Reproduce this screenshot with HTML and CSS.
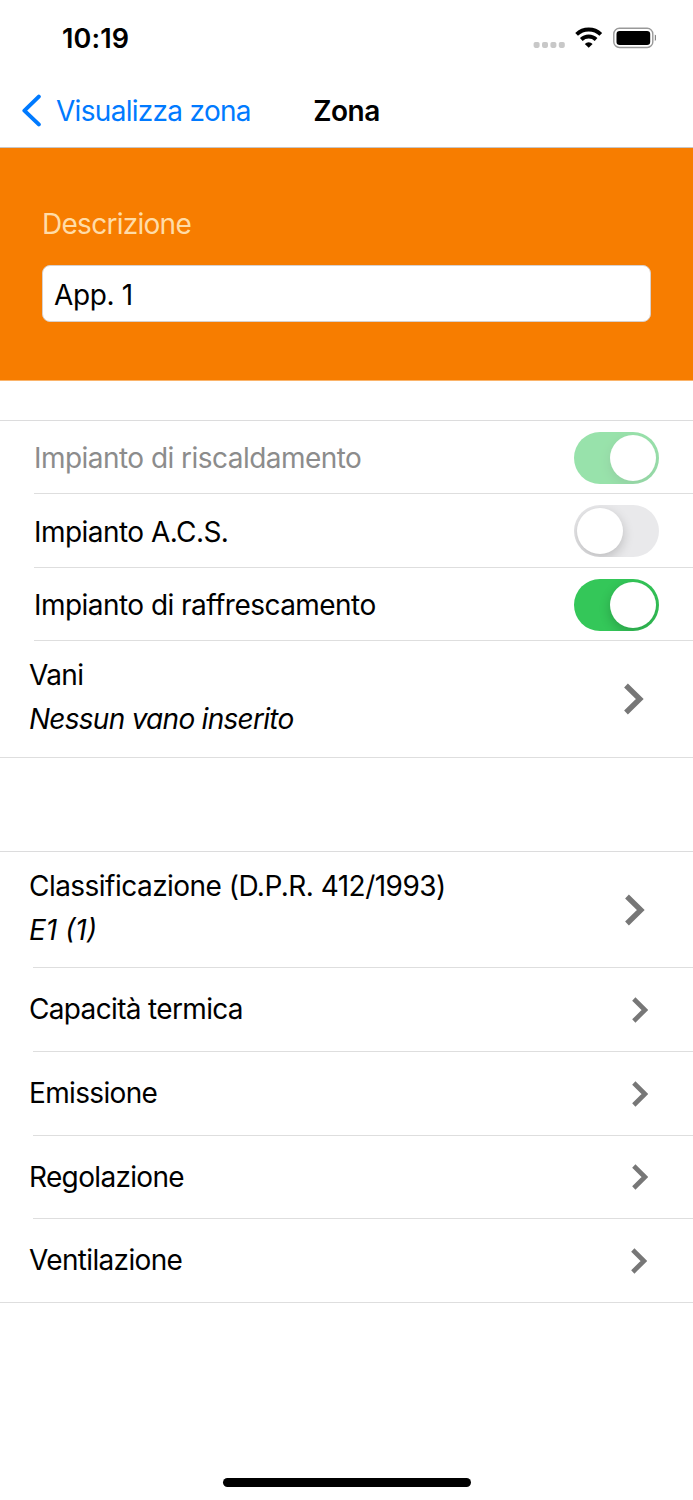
FILE: index.html
```html
<!DOCTYPE html>
<html lang="it">
<head>
    <meta charset="UTF-8">
    <meta name="viewport" content="width=device-width, initial-scale=1.0">
    <title>Zona</title>
    <link rel="stylesheet" href="styles.css">
</head>
<body>
    <!-- Barra di stato -->
    <div class="status-bar">
        <span class="time">10:19</span>
        <svg class="status-icons" width="126" height="24" viewBox="0 0 126 24">
            <g fill="#c8c8c8">
                <rect x="3.6" y="15.9" width="6" height="6" rx="1.8"/>
                <rect x="12" y="15.9" width="6" height="6" rx="1.8"/>
                <rect x="20.4" y="15.9" width="6" height="6" rx="1.8"/>
                <rect x="28.8" y="15.9" width="6" height="6" rx="1.8"/>
            </g>
            <g fill="none" stroke="#000" stroke-width="3.9">
                <path d="M46.6 8.4a17.4 17.4 0 0 1 24.2 0"/>
                <path d="M51.3 13.5a10.7 10.7 0 0 1 14.8 0"/>
            </g>
            <path d="M58.7 21.8l-3.9-3.9a5.6 5.6 0 0 1 7.8 0z"/>
            <rect x="83.8" y="2.3" width="39" height="19.2" rx="5.6" fill="none" stroke="#999" stroke-width="1.4"/>
            <rect x="86.5" y="4.9" width="33.7" height="14" rx="3.2"/>
            <path d="M124.8 8.4c2.7 1.4 2.7 5.2 0 6.6z" fill="#888"/>
        </svg>
    </div>

    <!-- Navigazione -->
    <div class="nav-bar">
        <a class="back" href="#">
            <svg width="22" height="34" viewBox="0 0 22 34"><path d="M18.8 2.6L4.4 16.6l14.4 13.8" fill="none" stroke="#007aff" stroke-width="4" stroke-linecap="round" stroke-linejoin="round"/></svg>
            <span>Visualizza zona</span>
        </a>
        <h1>Zona</h1>
    </div>

    <form class="header">
        <label for="description">Descrizione</label>
        <input type="text" id="description" value="App. 1">
    </form>

    <!-- Impianti -->
    <div class="list">
        <div class="row r73 disabled">
            <span>Impianto di riscaldamento</span>
            <div class="switch on"></div>
        </div>
        <div class="row r74">
            <span>Impianto A.C.S.</span>
            <div class="switch"></div>
        </div>
        <div class="row r73">
            <span>Impianto di raffrescamento</span>
            <div class="switch on"></div>
        </div>
        <div class="row link tall last">
            <div class="text"><span>Vani</span><em>Nessun vano inserito</em></div>
            <svg class="arrow big" viewBox="0 0 20 32"><path d="M2 2.5L15.8 16 2 29.5" /></svg>
        </div>
    </div>

    <!-- Caratteristiche della zona -->
    <div class="list second">
        <div class="row link tall">
            <div class="text"><span class="wide">Classificazione (D.P.R. 412/1993)</span><em class="class-code">E1 (1)</em></div>
            <svg class="arrow big" viewBox="0 0 20 32"><path d="M2 2.5L15.8 16 2 29.5" /></svg>
        </div>
        <div class="row link">
            <span>Capacità termica</span>
            <svg class="arrow" viewBox="0 0 16 26"><path d="M1.8 2L12.9 13 1.8 24" /></svg>
        </div>
        <div class="row link">
            <span>Emissione</span>
            <svg class="arrow" viewBox="0 0 16 26"><path d="M1.8 2L12.9 13 1.8 24" /></svg>
        </div>
        <div class="row link short">
            <span>Regolazione</span>
            <svg class="arrow" viewBox="0 0 16 26"><path d="M1.8 2L12.9 13 1.8 24" /></svg>
        </div>
        <div class="row link last">
            <span>Ventilazione</span>
            <svg class="arrow" viewBox="0 0 16 26"><path d="M1.8 2L12.9 13 1.8 24" /></svg>
        </div>
    </div>

    <div class="home-indicator"></div>
</body>
</html>
```
FILE: styles.css
```css
* {
    box-sizing: border-box;
}

body {
    font-family: Inter, "Liberation Sans", sans-serif;
    font-size: 28px;
    line-height: 34px;
    letter-spacing: -0.54px;
    background-color: #fff;
    margin: 0;
    color: #000;
    height: 1500px;
    display: flex;
    flex-direction: column;
}

.status-bar {
    display: flex;
    justify-content: space-between;
    height: 74px;
    padding: 22px 37px 0 62px;
}

.time {
    font-size: 27px;
    font-weight: 600;
    letter-spacing: 0.1px;
}

.status-icons {
    margin-top: 4px;
}

.nav-bar {
    display: grid;
    grid-template-columns: 1fr auto 1fr;
    align-items: center;
    height: 74px;
    border-bottom: 1px solid #c6c6c8;
}

.back {
    display: flex;
    align-items: center;
    padding-left: 20px;
    color: #007aff;
    text-decoration: none;
    white-space: nowrap;
    letter-spacing: -0.7px;
}

.back span {
    margin-left: 14px;
}

h1 {
    margin: 0;
    font-size: 28px;
    font-weight: 600;
    letter-spacing: -0.45px;
}

.header {
    display: flex;
    flex-direction: column;
    height: 233px;
    padding: 59px 42px 0;
    border-bottom: 1px solid #fbb46a;
    background-color: #f77d00;
}

.header label {
    color: #ffdca8;
    letter-spacing: -0.72px;
}

.header input {
    width: 100%;
    height: 57px;
    margin-top: 24px;
    padding: 2px 11px 0;
    border: 1px solid #d8d0cc;
    border-radius: 8px;
    background-color: #fff;
    color: #000;
    font: inherit;
    letter-spacing: -0.35px;
}

.list {
    margin-top: 39px;
    border-top: 1px solid #dcdcdd;
}

.list.second {
    margin-top: 93px;
}

.row {
    display: flex;
    align-items: center;
    justify-content: space-between;
    height: 84px;
    margin-left: 34px;
    padding-right: 34px;
    border-bottom: 1px solid #dedede;
}

.row > span {
    padding-top: 2px;
}

.row.r73 {
    height: 73px;
}

.row.r74 {
    height: 74px;
}

.row.short {
    height: 83px;
}

.row.tall {
    height: 116px;
}

.row.link {
    margin-left: 0;
    padding: 0 45px 0 29px;
    border-image: linear-gradient(to right, transparent 34px, #dedede 34px) 1;
    letter-spacing: -0.66px;
}

.row.link > span {
    padding: 0 0 1px;
}

.row.link.last {
    border-image: none;
    padding-right: 46px;
}

.row.link.tall {
    padding-right: 48px;
}

.row.tall.last {
    height: 117px;
    padding-right: 49px;
}

.text {
    display: flex;
    flex-direction: column;
    gap: 10px;
    margin-top: -4px;
}

.text em {
    letter-spacing: -0.73px;
}

.text .wide {
    letter-spacing: -0.53px;
}

.text .class-code {
    letter-spacing: 0;
}

.disabled > span {
    color: #8c8c8c;
}

.switch {
    width: 85px;
    height: 52px;
    margin-top: 1px;
    padding: 3px;
    border-radius: 26px;
    background-color: #e9e9eb;
    overflow: hidden;
}

.switch::before {
    content: "";
    display: block;
    width: 46px;
    height: 46px;
    border-radius: 50%;
    background-color: #fff;
    box-shadow: 0 4px 12px rgba(0, 0, 0, 0.2);
}

.switch.on {
    background-color: #34c759;
}

.switch.on::before {
    margin-left: 33px;
}

.disabled .switch {
    opacity: 0.5;
}

.arrow {
    width: 16px;
    height: 26px;
    fill: none;
    stroke: #777;
    stroke-width: 4.6;
}

.arrow.big {
    width: 20px;
    height: 32px;
    stroke-width: 5.4;
}

.home-indicator {
    width: 248px;
    height: 9px;
    margin: auto auto 13px;
    border-radius: 5px;
    background-color: #000;
}
```
